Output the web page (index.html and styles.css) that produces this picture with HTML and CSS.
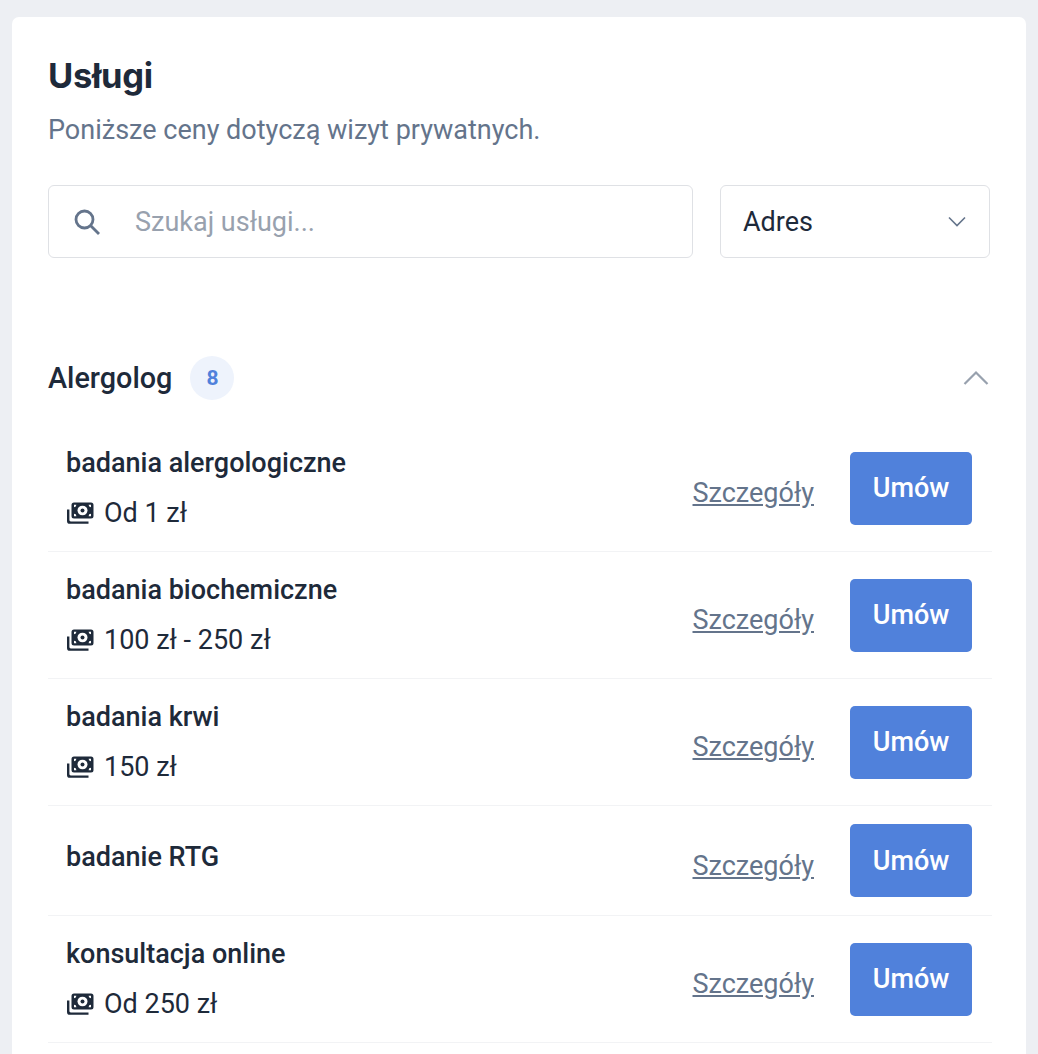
FILE: index.html
```html
<!DOCTYPE html>
<html lang="pl">
<head>
    <meta charset="UTF-8">
    <meta name="viewport" content="width=device-width, initial-scale=1.0">
    <title>Usługi</title>
    <link rel="stylesheet" href="styles.css">
</head>
<body>
    <svg class="sprites" width="0" height="0" aria-hidden="true">
        <symbol id="money" viewBox="0 0 28 22">
            <path d="M8 0.500h17a2.500 2.500 0 0 1 2.500 2.500v11a2.500 2.500 0 0 1-2.500 2.500h-17a2.500 2.500 0 0 1-2.500-2.500v-11a2.500 2.500 0 0 1 2.500-2.500z"/>
            <path d="M1 7.500h2.400v10.500c0 .8.600 1.400 1.400 1.400h17.700v2.400h-18.600a2.900 2.900 0 0 1-2.900-2.900z"/>
            <ellipse cx="16.500" cy="8.500" rx="5" ry="4.800" fill="#fff"/>
            <ellipse cx="16.500" cy="8.500" rx="2" ry="2"/>
            <path d="M8 2.800h2.400a2.400 2.400 0 0 1-2.400 2.400zM25 2.800h-2.400a2.400 2.400 0 0 0 2.400 2.400zM8 14.200h2.400a2.400 2.400 0 0 0-2.400-2.400zM25 14.200h-2.400a2.400 2.400 0 0 1 2.400-2.400z" fill="#fff"/>
        </symbol>
    </svg>

    <div class="card">
        <h1>Usługi</h1>
        <p class="lead">Poniższe ceny dotyczą wizyt prywatnych.</p>

        <div class="filters">
            <label class="search">
                <svg class="search-icon" viewBox="0 0 26 26" fill="none" stroke="#64748b" stroke-width="2.800">
                    <circle cx="10.500" cy="10.500" r="8.500"/>
                    <path d="M16.500 16.500l8.500 8.500"/>
                </svg>
                <input type="text" placeholder="Szukaj usługi...">
            </label>
            <div class="select">
                <span>Adres</span>
                <svg class="select-arrow" viewBox="0 0 18 11" fill="none" stroke="#64748b" stroke-width="1.600">
                    <path d="M1 1.500l8 8 8-8"/>
                </svg>
            </div>
        </div>

        <div class="group-head">
            <h2>Alergolog</h2>
            <span class="badge">8</span>
            <svg class="group-arrow" viewBox="0 0 26 16" fill="none" stroke="#98a1ae" stroke-width="2.200">
                <path d="M1.500 14l11.500-11.500 11.500 11.500"/>
            </svg>
        </div>

        <ul class="services">
            <li class="service">
                <div>
                    <h3>badania alergologiczne</h3>
                    <p class="price"><svg class="money"><use href="#money"/></svg>Od 1 zł</p>
                </div>
                <div class="actions">
                    <a href="#">Szczegóły</a>
                    <button type="button">Umów</button>
                </div>
            </li>
            <li class="service">
                <div>
                    <h3>badania biochemiczne</h3>
                    <p class="price"><svg class="money"><use href="#money"/></svg>100 zł - 250 zł</p>
                </div>
                <div class="actions">
                    <a href="#">Szczegóły</a>
                    <button type="button">Umów</button>
                </div>
            </li>
            <li class="service">
                <div>
                    <h3>badania krwi</h3>
                    <p class="price"><svg class="money"><use href="#money"/></svg>150 zł</p>
                </div>
                <div class="actions">
                    <a href="#">Szczegóły</a>
                    <button type="button">Umów</button>
                </div>
            </li>
            <li class="service no-price">
                <div>
                    <h3>badanie RTG</h3>
                </div>
                <div class="actions">
                    <a href="#">Szczegóły</a>
                    <button type="button">Umów</button>
                </div>
            </li>
            <li class="service">
                <div>
                    <h3>konsultacja online</h3>
                    <p class="price"><svg class="money"><use href="#money"/></svg>Od 250 zł</p>
                </div>
                <div class="actions">
                    <a href="#">Szczegóły</a>
                    <button type="button">Umów</button>
                </div>
            </li>
        </ul>
    </div>
</body>
</html>
```

FILE: styles.css
```css
* {
    margin: 0;
    padding: 0;
    box-sizing: border-box;
}

body {
    background-color: #edeff3;
    color: #1e2a3a;
    font-family: Roboto, Arial, sans-serif;
    padding: 17px 12px 0;
}

.sprites {
    display: block;
}

.card {
    background: #fff;
    border-radius: 7px;
    padding: 36px 36px 40px;
}

h1 {
    font-family: Inter, Roboto, sans-serif;
    font-size: 34.500px;
    font-weight: 700;
    line-height: 46px;
    letter-spacing: -0.3px;
}

.lead {
    color: #64748b;
    font-size: 27px;
    line-height: 34px;
    margin-top: 14px;
}

.filters {
    display: flex;
    gap: 27px;
    margin-top: 38px;
}

.search,
.select {
    display: flex;
    align-items: center;
    height: 73px;
    border: 1.500px solid #dfe1e5;
    border-radius: 6px;
}

.search {
    flex: 1;
    padding-left: 25px;
}

.search-icon {
    width: 26px;
    height: 26px;
    flex: none;
}

.search input {
    flex: 1;
    min-width: 0;
    border: none;
    outline: none;
    font-family: inherit;
    font-size: 27px;
    color: #1e2a3a;
    margin-left: 35px;
}

.search input::placeholder {
    color: #98a1ae;
    opacity: 1;
}

.select {
    width: 270px;
    justify-content: space-between;
    padding: 0 23px 0 22px;
    font-size: 27px;
}

.select-arrow {
    width: 18px;
    height: 11px;
}

.group-head {
    display: flex;
    align-items: center;
    margin-top: 98px;
    height: 44px;
}

h2 {
    font-size: 28.800px;
    font-weight: 500;
}

.badge {
    width: 44px;
    height: 44px;
    margin-left: 18px;
    border-radius: 50%;
    background: #eef3fc;
    color: #5081db;
    font-size: 21px;
    font-weight: 700;
    line-height: 44px;
    text-align: center;
}

.group-arrow {
    width: 26px;
    height: 16px;
    margin-left: auto;
    margin-right: 1px;
}

.services {
    list-style: none;
    margin-top: 25px;
    margin-right: -2px;
}

.service {
    display: flex;
    justify-content: space-between;
    align-items: center;
    height: 127px;
    padding: 0 20px 0 18px;
    border-bottom: 1px solid #f2f3f5;
}

.service.no-price {
    height: 110px;
}

.service.no-price h3 {
    margin-bottom: 8px;
}

h3 {
    font-size: 27px;
    font-weight: 500;
    line-height: 34px;
}

.price {
    display: flex;
    align-items: center;
    gap: 10px;
    font-size: 27px;
    line-height: 34px;
    margin-top: 16px;
}

.money {
    width: 28px;
    height: 22px;
    fill: #1e2a3a;
}

.actions {
    display: flex;
    align-items: center;
    gap: 36px;
}

.actions a {
    color: #64748b;
    font-size: 27px;
    padding-top: 10px;
}

.actions button {
    width: 122px;
    height: 73px;
    background: #5081db;
    color: #fff;
    border: none;
    border-radius: 5px;
    font-family: inherit;
    font-size: 27px;
    font-weight: 500;
    cursor: pointer;
}
```
